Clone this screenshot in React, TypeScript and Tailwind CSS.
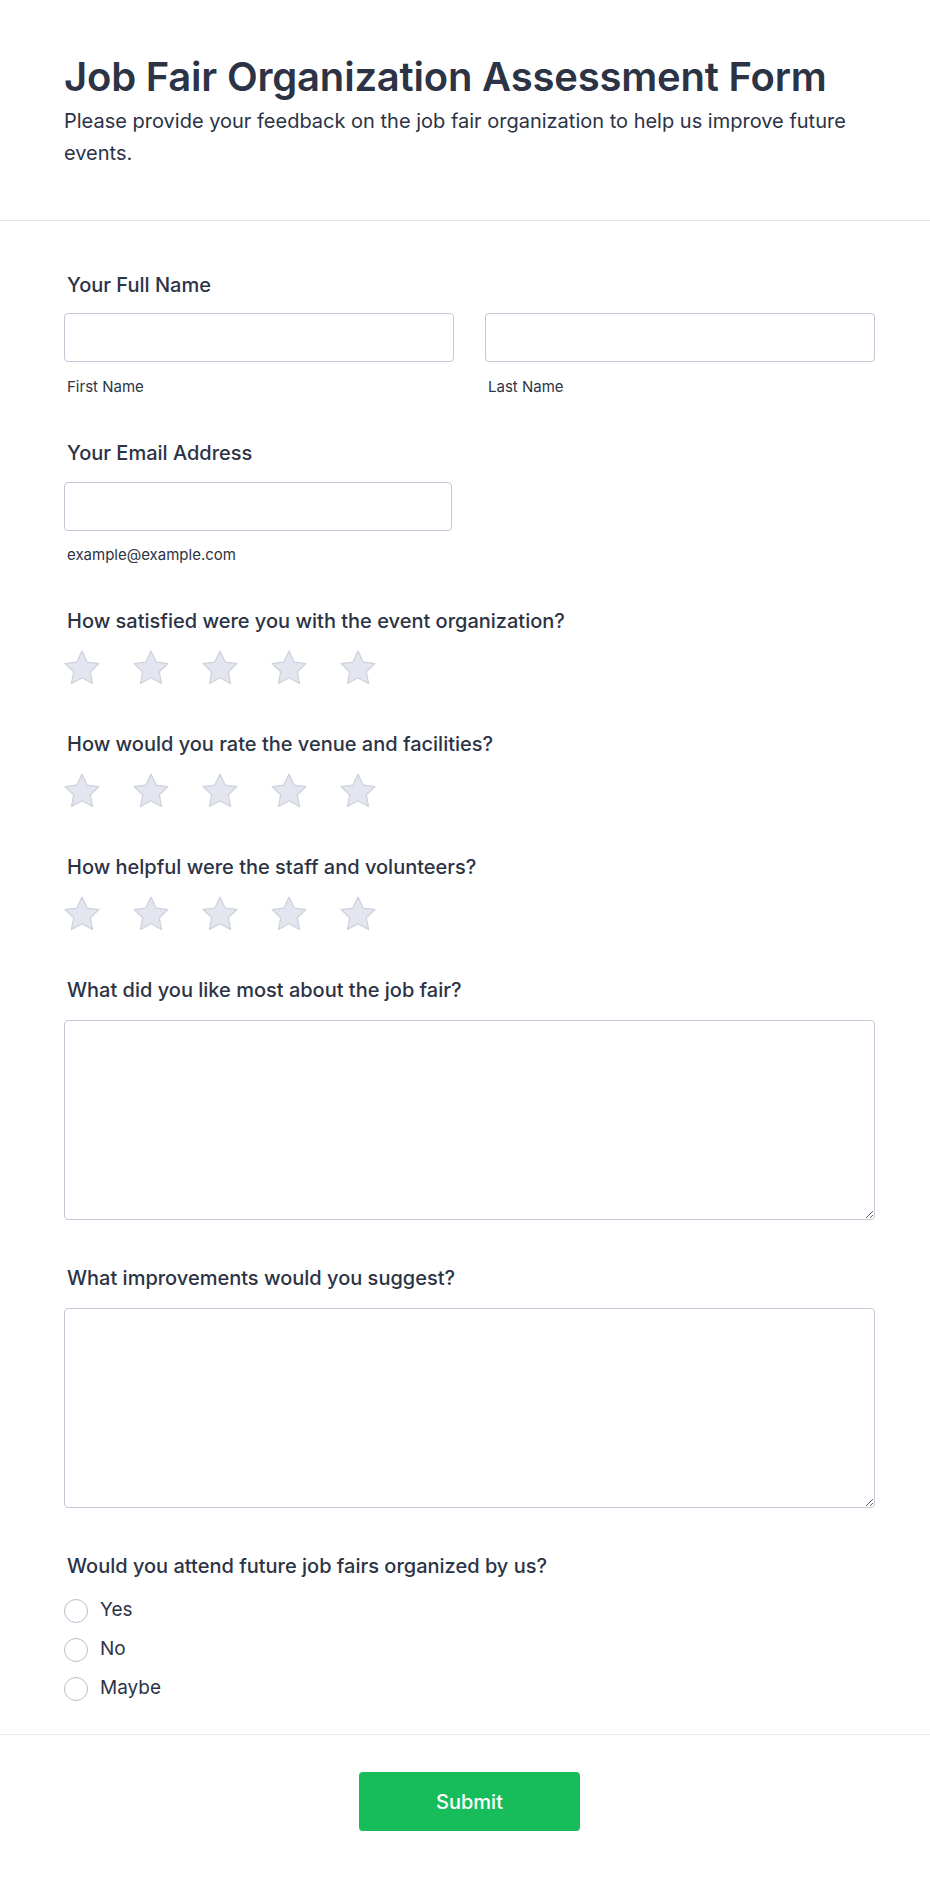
import React from "react";

const questions = [
  "How satisfied were you with the event organization?",
  "How would you rate the venue and facilities?",
  "How helpful were the staff and volunteers?",
];

const Star = () => (
  <svg width="36" height="35" viewBox="2 2 20 19.4" className="shrink-0">
    <path
      d="M12 2.6l2.85 6.05 6.55.85-4.8 4.55 1.25 6.55L12 17.4l-5.85 3.2 1.25-6.55-4.8-4.55 6.55-.85z"
      fill="#e3e6ef"
      stroke="#cdd2de"
      strokeWidth="0.7"
      strokeLinejoin="round"
    />
  </svg>
);

const Label = ({ children }: { children: React.ReactNode }) => (
  <label className="block pl-[3px] text-[20px] leading-[24px] font-medium text-[#2c3345]">
    {children}
  </label>
);

const inputCls =
  "block h-[49px] rounded-[4px] border border-[#c3c8d6] bg-white outline-none";

export default function App() {
  return (
    <div className="min-h-[1881px] bg-white text-[#2c3345]" style={{ fontFamily: "Inter, 'Noto Sans', sans-serif" }}>
      <header className="pl-16 pr-[55px] pt-[53px] pb-[51px] border-b border-[#e0e3ed]">
        <h1 className="text-[40px] leading-[48px] font-semibold tracking-[-0.2px] text-[#2c3345]">
          Job Fair Organization Assessment Form
        </h1>
        <p className="mt-[4px] text-[20px] leading-[32px] text-[#2c3345]">
          Please provide your feedback on the job fair organization to help us improve future events.
        </p>
      </header>

      <div className="pl-16 pr-[55px] pt-[52px] pb-[26px] border-b border-[#e6e8f0]">
        <div>
          <Label>Your Full Name</Label>
          <div className="mt-[16px] grid grid-cols-2 gap-[31px]">
            <div>
              <input className={`${inputCls} w-full`} />
              <div className="mt-[15px] pl-[3px] text-[15px] leading-[20px]">First Name</div>
            </div>
            <div>
              <input className={`${inputCls} w-full`} />
              <div className="mt-[15px] pl-[3px] text-[15px] leading-[20px]">Last Name</div>
            </div>
          </div>
        </div>

        <div className="mt-[44px]">
          <Label>Your Email Address</Label>
          <input className={`${inputCls} mt-[17px] w-[388px]`} />
          <div className="mt-[14px] pl-[3px] text-[15px] leading-[20px]">example@example.com</div>
        </div>

        {questions.map((q, i) => (
          <div key={q} className={i === 0 ? "mt-[44px]" : "mt-[47px]"}>
            <Label>{q}</Label>
            <div className="mt-[17px] flex gap-[33px]">
              {[0, 1, 2, 3, 4].map((s) => (
                <Star key={s} />
              ))}
            </div>
          </div>
        ))}

        <div className="mt-[47px]">
          <Label>What did you like most about the job fair?</Label>
          <textarea className="mt-[18px] block h-[200px] w-full rounded-[4px] border border-[#c3c8d6] outline-none" />
        </div>

        <div className="mt-[46px]">
          <Label>What improvements would you suggest?</Label>
          <textarea className="mt-[18px] block h-[200px] w-full rounded-[4px] border border-[#c3c8d6] outline-none" />
        </div>

        <div className="mt-[46px]">
          <Label>Would you attend future job fairs organized by us?</Label>
          <div className="mt-[13px]">
            {["Yes", "No", "Maybe"].map((opt) => (
              <label key={opt} className="flex h-[39px] items-center gap-[12px]">
                <span className="h-[24px] w-[24px] rounded-full border border-[#b8bdcc] bg-white" />
                <span className="text-[19px] text-[#2c3345]">{opt}</span>
              </label>
            ))}
          </div>
        </div>
      </div>

      <div className="pl-16 pr-[55px] pt-[37px] pb-[50px] flex justify-center">
        <button className="h-[59px] w-[221px] rounded-[4px] bg-[#18bd5b] text-[20px] font-medium text-white">
          Submit
        </button>
      </div>
    </div>
  );
}
